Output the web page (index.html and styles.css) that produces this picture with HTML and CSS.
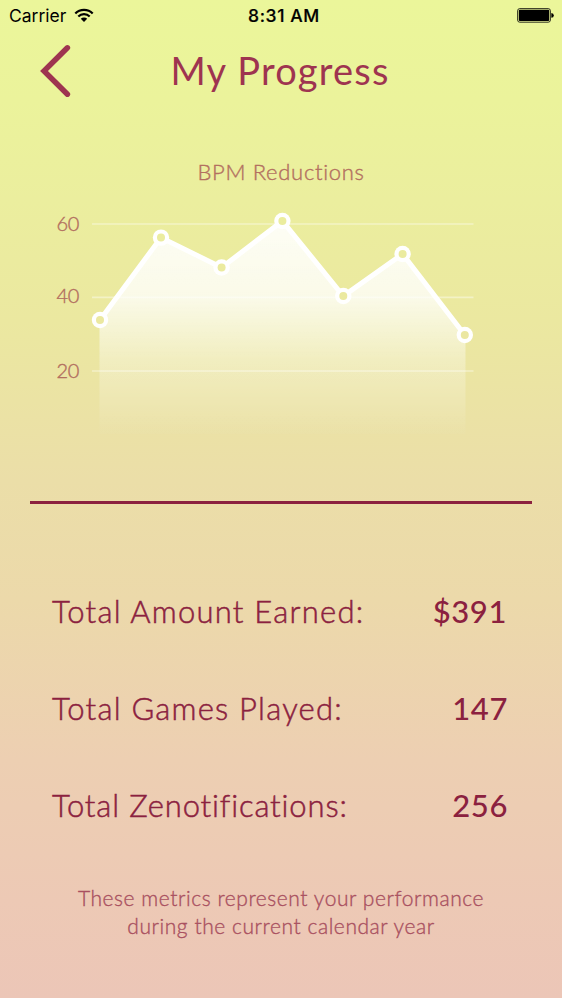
FILE: index.html
```html
<!doctype html>
<html lang="en">
  <head>
    <meta charset="UTF-8" />
    <title>My Progress</title>
    <link rel="stylesheet" href="styles.css">
  </head>

  <body>
    <div class="status_bar">
      <div class="carrier">
        <span>Carrier</span>
        <svg width="20" height="15" viewBox="0 0 20 15">
          <g fill="none" stroke="black" stroke-width="2.2">
            <path d="M1.3 5.6 A12.2 12.2 0 0 1 18.7 5.6" />
            <path d="M4.3 8.6 A8 8 0 0 1 15.7 8.6" />
          </g>
          <path d="M10 14 L6.8 10.8 A4.6 4.6 0 0 1 13.2 10.8 Z" />
        </svg>
      </div>
      <span class="time">8:31 AM</span>
      <svg class="battery" width="38" height="15" viewBox="0 0 38 15">
        <rect x="0.6" y="0.6" width="32.8" height="13.6" rx="2.2" fill="none" stroke="black" stroke-width="0.8" />
        <rect x="1.8" y="1.7" width="30.4" height="11.4" rx="1" />
        <path d="M34.3 5 Q36.8 5.2 36.8 7.4 Q36.8 9.6 34.3 9.8 Z" />
      </svg>
    </div>

    <div class="header">
      <svg class="back" width="32" height="54" viewBox="0 0 32 54">
        <path d="M28.4 3.8 L5 27 L28.4 50.2" />
      </svg>
      <h1>My Progress</h1>
    </div>

    <div class="chart">
      <h3>BPM Reductions</h3>
      <svg width="562" height="240" viewBox="0 200 562 240">
        <defs>
          <linearGradient id="fade" gradientUnits="userSpaceOnUse" x1="0" y1="221" x2="0" y2="436">
            <stop offset="0" stop-color="white" stop-opacity="0.9" />
            <stop offset="0.36" stop-color="white" stop-opacity="0.76" />
            <stop offset="0.48" stop-color="white" stop-opacity="0.58" />
            <stop offset="0.65" stop-color="white" stop-opacity="0.32" />
            <stop offset="1" stop-color="white" stop-opacity="0.02" />
          </linearGradient>
          <mask id="holes" maskUnits="userSpaceOnUse" x="0" y="200" width="562" height="240">
            <rect x="0" y="200" width="562" height="240" fill="white" />
            <circle cx="100" cy="320" r="4" />
            <circle cx="161" cy="237.6" r="4" />
            <circle cx="221.6" cy="267.5" r="4" />
            <circle cx="282.4" cy="221" r="4" />
            <circle cx="343.3" cy="296" r="4" />
            <circle cx="402.6" cy="254" r="4" />
            <circle cx="464.8" cy="335" r="4" />
          </mask>
        </defs>
        <g class="axis">
          <text x="79" y="231.3">60</text>
          <text x="79" y="303.3">40</text>
          <text x="79" y="378.3">20</text>
        </g>
        <g mask="url(#holes)">
          <path fill="url(#fade)" d="M99.5 320 L161 237.6 L221.6 267.5 L282.4 221 L343.3 296 L402.6 254 L465.5 335 V434 H99.5 Z" />
          <path class="grid" d="M92 224 H473.5 M92 297.3 H473.5 M92 371 H473.5" />
          <path class="line" d="M100 320 L161 237.6 L221.6 267.5 L282.4 221 L343.3 296 L402.6 254 L464.8 335" />
          <g fill="white">
            <circle cx="100" cy="320" r="8.2" />
            <circle cx="161" cy="237.6" r="8.2" />
            <circle cx="221.6" cy="267.5" r="8.2" />
            <circle cx="282.4" cy="221" r="8.2" />
            <circle cx="343.3" cy="296" r="8.2" />
            <circle cx="402.6" cy="254" r="8.2" />
            <circle cx="464.8" cy="335" r="8.2" />
          </g>
        </g>
      </svg>
    </div>

    <div class="totals">
      <div class="total">
        <span class="label">Total Amount Earned:</span>
        <span class="value dollars">$391</span>
      </div>
      <div class="total">
        <span class="label">Total Games Played:</span>
        <span class="value">147</span>
      </div>
      <div class="total">
        <span class="label zen">Total Zenotifications:</span>
        <span class="value">256</span>
      </div>
    </div>

    <p class="note">
      These metrics represent your performance<br />
      during the current calendar year
    </p>
  </body>
</html>
```
FILE: styles.css
```css
body {
  margin: 0;
  height: 998px;
  overflow: hidden;
  font-family: Lato, "Liberation Sans", sans-serif;
  color: #8b213f;
  background: linear-gradient(
    #ebf69a 0,
    #ebf39b 100px,
    #ebee9e 200px,
    #ebe8a0 320px,
    #ebdea8 480px,
    #ecd9aa 600px,
    #edcfb2 760px,
    #edc9b5 900px,
    #ecc6b7 998px
  );
}

.status_bar {
  display: grid;
  grid-template-columns: 1fr auto 1fr;
  align-items: center;
  height: 31px;
  padding: 0 7px 0 9px;
  font-family: Inter, "Liberation Sans", sans-serif;
  font-size: 17.5px;
  color: black;
}

.carrier {
  display: flex;
  align-items: center;
  gap: 8px;
}

.time {
  margin-left: 4px;
  font-weight: 500;
  letter-spacing: 0.6px;
  -webkit-text-stroke: 0.2px;
}

.battery {
  justify-self: end;
}

.header {
  display: grid;
  grid-template-columns: 32px 1fr 32px;
  align-items: center;
  height: 54px;
  margin-top: 13px;
  padding: 0 41px 0 39px;
}

.back path {
  fill: none;
  stroke: #9e3450;
  stroke-width: 5.5;
  stroke-linecap: round;
}

h1 {
  margin: 0;
  height: 54px;
  text-align: center;
  font-size: 38px;
  font-weight: 400;
  line-height: 52px;
  letter-spacing: 1.2px;
  color: #9e3450;
}

.chart {
  height: 343px;
  margin: 0 30px;
  padding-top: 60px;
  border-bottom: 3px solid #8b213f;
}

.chart h3 {
  margin: 0;
  text-align: center;
  font-size: 22px;
  font-weight: 300;
  line-height: 28px;
  letter-spacing: 0.7px;
  color: #b37060;
  -webkit-text-stroke: 0.4px;
}

.chart svg {
  display: block;
  margin: 14px -30px 0;
}

.axis {
  font-size: 20px;
  font-weight: 300;
  letter-spacing: -0.3px;
  fill: #b37060;
  stroke: #b37060;
  stroke-width: 0.4px;
  text-anchor: end;
}

.grid {
  stroke: white;
  stroke-opacity: 0.4;
  stroke-width: 1.7;
}

.line {
  fill: none;
  stroke: white;
  stroke-width: 5;
}

.totals {
  display: flex;
  flex-direction: column;
  gap: 57px;
  padding: 87px 54px 0 52px;
}

.total {
  display: flex;
  justify-content: space-between;
  font-size: 31px;
  line-height: 40px;
}

.label {
  font-weight: 300;
  letter-spacing: 1.23px;
  -webkit-text-stroke: 0.5px;
}

.zen {
  letter-spacing: 0.86px;
}

.value {
  font-weight: 500;
  letter-spacing: 0.6px;
}

.dollars {
  margin-right: 1px;
}

.note {
  margin: 59px 0 0;
  text-align: center;
  font-size: 21px;
  font-weight: 300;
  line-height: 28px;
  letter-spacing: 0.56px;
  color: #a95060;
  -webkit-text-stroke: 0.35px;
}
```
